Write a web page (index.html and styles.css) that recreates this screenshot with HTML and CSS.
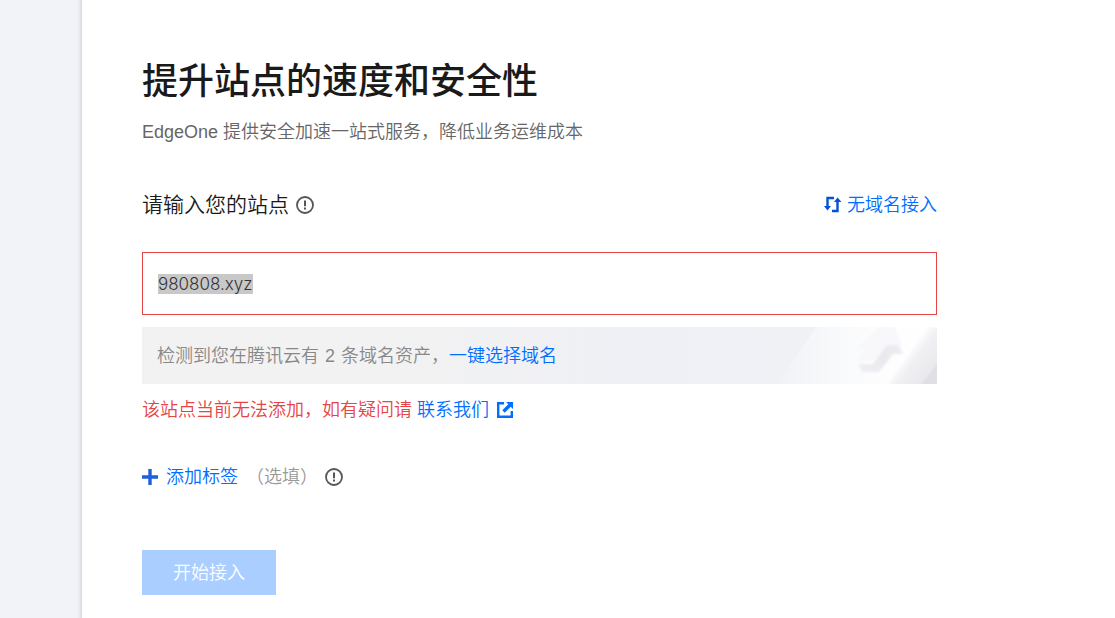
FILE: index.html
```html
<!DOCTYPE html>
<html lang="zh-CN">
<head>
<meta charset="utf-8">
<meta name="viewport" content="width=device-width, initial-scale=1">
<title>EdgeOne</title>
<link rel="stylesheet" href="styles.css">
</head>
<body>
<div class="layout">
  <aside class="rail"></aside>
  <main class="panel">
    <form class="form">
      <h1 class="title">提升站点的速度和安全性</h1>
      <p class="subtitle">EdgeOne 提供安全加速一站式服务，降低业务运维成本</p>

      <div class="field-head">
        <label class="label" for="site">请输入您的站点</label>
        <svg class="info" viewBox="0 0 18 18" aria-hidden="true"><circle cx="9" cy="9" r="8" fill="none" stroke="currentColor" stroke-width="1.8"/><path d="M8 4.5h2v5.700H8zM8 11.500h2v2H8z" fill="currentColor"/></svg>
        <a class="link switch" href="#">
          <svg class="switch-icon" viewBox="0 0 18 18" aria-hidden="true"><path d="M10 2H3.500v9M8 15h5.500V5" fill="none" stroke="currentColor" stroke-width="2.400"/><path d="M0 10h7l-3.500 4.500zM10 6h7.500l-4-4.500z" fill="currentColor"/></svg>
          无域名接入
        </a>
      </div>

      <input class="site-input" id="site" type="text" value="980808.xyz" autocomplete="off" spellcheck="false">

      <div class="notice">
        <svg class="notice-art" viewBox="0 0 197 57" aria-hidden="true">
          <defs>
            <linearGradient id="fade"><stop offset="0" stop-color="#f1f2f5"/><stop offset=".35" stop-color="#f8f9fb"/><stop offset=".65" stop-color="#fdfdfe"/><stop offset="1" stop-color="#fff"/></linearGradient>
            <linearGradient id="beam" gradientUnits="userSpaceOnUse" x1="164" y1="26" x2="190" y2="46"><stop offset="0" stop-color="#fff"/><stop offset=".4" stop-color="#f0f0f3"/><stop offset="1" stop-color="#e9e9ed"/></linearGradient>
            <linearGradient id="side" x1="0" y1="1" x2="1" y2="0"><stop offset="0" stop-color="#f0f0f4"/><stop offset=".5" stop-color="#e9e9ee"/><stop offset="1" stop-color="#ededf1"/></linearGradient>
            <filter id="soft" x="-10%" y="-10%" width="120%" height="120%"><feGaussianBlur stdDeviation=".8"/></filter>
          </defs>
          <path d="M76 0H197V57H38z" fill="url(#fade)"/>
          <g filter="url(#soft)">
            <path d="M119 19l20-19h16l5 14 2 13-14-8-14 15H118l6-10z" fill="#f8f8fb"/>
            <path d="M118 37H133L147 18H158L163 27H153L139 45H122z" fill="url(#side)"/>
            <path d="M188 0H199V59H147z" fill="url(#beam)"/>
            <path d="M199 34V59H180z" fill="#dfdfe5"/>
          </g>
        </svg>
        <p class="notice-text">检测到您在腾讯云有 <span class="count">2</span> 条域名资产，<a class="link" href="#">一键选择域名</a></p>
      </div>

      <p class="error">该站点当前无法添加，如有疑问请 <a class="link contact" href="#">联系我们<svg class="external" viewBox="0 0 16 16" aria-hidden="true"><path d="M7 1.200H1.200v13.600h13.600V9" fill="none" stroke="currentColor" stroke-width="2.400"/><path d="M9 0h7v7l-2.300-2.300-6 6-2.400-2.400 6-6z" fill="currentColor"/></svg></a></p>

      <div class="tags">
        <button class="add" type="button">
          <svg class="plus" viewBox="0 0 16 16" aria-hidden="true"><path d="M8 0v16M0 8h16" stroke="currentColor" stroke-width="3.400"/></svg>
          添加标签
        </button>
        <span class="optional">（选填）</span>
        <svg class="info" viewBox="0 0 18 18" aria-hidden="true"><circle cx="9" cy="9" r="8" fill="none" stroke="currentColor" stroke-width="1.8"/><path d="M8 4.500h2v5.700H8zM8 11.500h2v2H8z" fill="currentColor"/></svg>
      </div>

      <button class="submit" type="submit" disabled>开始接入</button>
    </form>
  </main>
</div>
<script src="main.js"></script>
</body>
</html>
```
FILE: styles.css
```css
* {
  box-sizing: border-box;
}

body {
  margin: 0;
  background: #fff;
  color: #1a1a1a;
  font: 350 18px/26px "Liberation Sans", "Noto Sans CJK SC", sans-serif;
}

h1,
p {
  margin: 0;
}

button,
input {
  font: inherit;
}

.layout {
  display: flex;
  min-height: 100vh;
}

.rail {
  flex: 0 0 82px;
  background: linear-gradient(to left, #d9dae0, #ecedf2 3px, #f2f3f8 6px);
}

.panel {
  flex: 1;
  min-width: 0;
  padding: 55px 60px 23px;
}

.form {
  display: flex;
  flex-direction: column;
  max-width: 795px;
}

.title {
  font-size: 36px;
  line-height: 54px;
  font-weight: 500;
}

.subtitle {
  margin-top: 10px;
  color: #666;
}

.field-head {
  display: flex;
  align-items: center;
  gap: 7px;
  margin-top: 44px;
  height: 32px;
}

.label {
  font-size: 21px;
  line-height: 32px;
}

.info {
  width: 18px;
  height: 18px;
  color: #555;
}

.link {
  color: #006eff;
  text-decoration: none;
}

.switch {
  display: flex;
  align-items: center;
  gap: 5px;
  margin-left: auto;
}

.switch-icon {
  width: 18px;
  height: 18px;
  color: #0052d9;
}

.site-input {
  width: 100%;
  height: 63px;
  margin-top: 31px;
  padding: 0 15px;
  border: 1px solid #e54545;
  border-radius: 0;
  outline: 0;
  color: #333;
  font-family: Inter, "Noto Sans CJK SC", sans-serif;
  font-size: 17px;
}

.site-input::selection {
  background: #c8c8c8;
  color: #333;
}

.notice {
  display: grid;
  align-items: center;
  margin-top: 12px;
  height: 57px;
  background: linear-gradient(to right, #f2f2f2 30%, #eff0f5 60%, #f1f2f5);
}

.notice-art {
  grid-area: 1 / 1;
  justify-self: end;
  width: 197px;
  height: 57px;
}

.notice-text {
  grid-area: 1 / 1;
  padding: 0 15px;
  color: #888;
}

.count {
  padding: 0 1px;
}

.error {
  margin-top: 13px;
  color: #e54545;
}

.external {
  width: 16px;
  height: 16px;
  margin-left: 8px;
  vertical-align: -2px;
}

.tags {
  display: flex;
  align-items: center;
  margin-top: 41px;
}

.add {
  display: flex;
  align-items: center;
  gap: 8px;
  padding: 0;
  border: 0;
  background: none;
  color: #006eff;
}

.plus {
  width: 16px;
  height: 16px;
  color: #1f5fdc;
}

.optional {
  margin: 0 7px 0 8px;
  color: #999;
}

.submit {
  align-self: flex-start;
  width: 134px;
  height: 45px;
  margin-top: 60px;
  padding: 0;
  border: 0;
  background: #a9ceff;
  color: #fff;
}
```
FILE: main.js
```js
const site = document.getElementById("site");
site.focus();
site.select();
```
